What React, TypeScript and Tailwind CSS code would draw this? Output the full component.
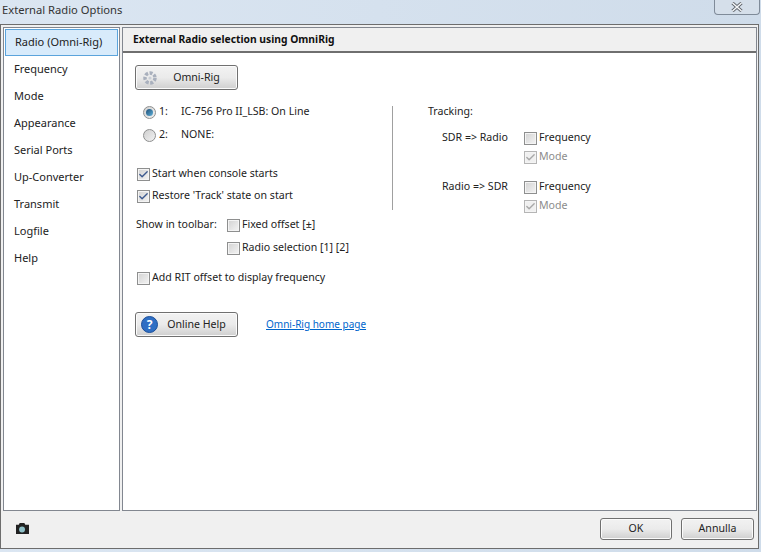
import { Check } from "lucide-react";

const menu = ["Radio (Omni-Rig)", "Frequency", "Mode", "Appearance", "Serial Ports", "Up-Converter", "Transmit", "Logfile", "Help"];

const CheckBox = ({ checked, disabled, label }: { checked?: boolean; disabled?: boolean; label: string }) => (
    <div className={`flex items-center gap-[2px] h-[14px] ${disabled ? "text-[#8c8c8c]" : "text-[#222]"}`}>
        <div className={`w-[13px] h-[13px] border flex items-center justify-center shadow-[inset_0_0_0_1px_#f4f4f4] ${disabled ? "bg-[#f0f0f0] border-[#b5b5b5]" : "border-[#8e8f8f] bg-gradient-to-br from-[#d2d2d2] to-[#f4f4f4]"}`}>
            {checked && <Check size={11} strokeWidth={3} className={disabled ? "text-[#a8a8a8]" : "text-[#3d5a8f]"} />}
        </div>
        <span className="whitespace-nowrap">{label}</span>
    </div>
);

const Radio = ({ selected, num, label }: { selected?: boolean; num: string; label: string }) => (
    <div className="flex items-center h-[12px]">
        <div className="w-[13px] h-[13px] rounded-full border border-[#8e8f8f] bg-gradient-to-br from-[#cfcfcf] to-[#f2f2f2] flex items-center justify-center ml-[8px] mr-[3px]">
            {selected && <div className="w-[7px] h-[7px] rounded-full bg-gradient-to-br from-[#1f4f78] to-[#5fb0d8]" />}
        </div>
        <span className="w-[22px]">{num}</span>
        <span className="whitespace-nowrap">{label}</span>
    </div>
);

const Button = ({ className, children }: { className: string; children: React.ReactNode }) => (
    <div className={`flex items-center justify-center rounded-[3px] border border-[#707070] bg-gradient-to-b from-[#f2f2f2] via-[#ebebeb] to-[#cfcfcf] shadow-[inset_0_0_0_1px_#fbfbfb] text-[#222] ${className}`}>
        {children}
    </div>
);

export default function App() {
    return (
        <div className="w-[761px] h-[552px] flex flex-col bg-gradient-to-r from-[#dbe6f2] to-[#cfdcea] text-[10.6px] text-[#222] overflow-hidden" style={{ fontFamily: '"Noto Sans", sans-serif' }}>
            {/* title bar */}
            <div className="h-[24px] shrink-0 flex items-start justify-between">
                <span className="pl-[2px] pt-[2px] text-[11.2px] text-[#333]">External Radio Options</span>
                <div className="w-[46px] h-[15px] mr-[1px] rounded-b-[4px] border border-t-0 border-[#7f8b99] bg-[#d5dfea] flex items-center justify-center">
                    <svg viewBox="0 0 12 10" className="w-[12px] h-[10px]">
                        <path d="M1.5 1l9 8M10.5 1l-9 8" stroke="#5a5f66" strokeWidth="3.2" />
                        <path d="M1.5 1l9 8M10.5 1l-9 8" stroke="#f4f6f8" strokeWidth="1.6" />
                    </svg>
                </div>
            </div>

            <div className="mr-[2px] h-[525px] shrink-0 border border-[#6d6d6d] bg-[#f0f0f0] flex flex-col">
                <div className="flex-1 flex gap-[2px] pl-[2px] pr-[1px] pt-[2px] min-h-0">
                    {/* sidebar */}
                    <div className="w-[117px] border border-[#828790] bg-white pt-[1px] px-[1px] text-[11px]">
                        {menu.map((m, i) => (
                            <div key={m} className={`h-[27px] flex items-center pl-[9px] whitespace-nowrap ${i === 0 ? "bg-[#d8ebfb] border border-[#5ba4dc] pl-[8px]" : ""}`}>
                                {m}
                            </div>
                        ))}
                    </div>

                    {/* main panel */}
                    <div className="flex-1 border border-[#828790] bg-white flex flex-col">
                        <div className="h-[25px] shrink-0 bg-[#f0f0f0] border-b-2 border-[#6f6f6f] flex items-center pl-[10px] font-bold text-[10.3px] text-[#111]">
                            External Radio selection using OmniRig
                        </div>
                        <div className="pl-[12px] pt-[12px]">
                            <Button className="w-[103px] h-[25px] relative">
                                <svg viewBox="0 0 16 16" className="absolute left-[6px] top-[4px] w-[16px] h-[16px]">
                                    <circle cx="8" cy="8" r="5" fill="none" stroke="#a9b0bd" strokeWidth="3.5" strokeDasharray="3 1.5" />
                                    <circle cx="8" cy="8" r="1.6" fill="#c9ced6" />
                                </svg>
                                <span className="pl-[20px]">Omni-Rig</span>
                            </Button>

                            <div className="flex">
                                {/* left column */}
                                <div className="w-[257px] pt-[16px]">
                                    <Radio selected num="1:" label="IC-756 Pro II_LSB: On Line" />
                                    <div className="mt-[11px]">
                                        <Radio num="2:" label="NONE:" />
                                    </div>
                                    <div className="mt-[26px] flex flex-col gap-[8px] pl-[2px]">
                                        <CheckBox checked label="Start when console starts" />
                                        <CheckBox checked label="Restore 'Track' state on start" />
                                    </div>
                                    <div className="mt-[15px] flex pl-[1px]">
                                        <span className="w-[91px] whitespace-nowrap leading-[12px]">Show in toolbar:</span>
                                        <div className="flex flex-col gap-[9px]">
                                            <CheckBox label="Fixed offset [±]" />
                                            <CheckBox label="Radio selection [1] [2]" />
                                        </div>
                                    </div>
                                    <div className="mt-[16px] pl-[2px]">
                                        <CheckBox label="Add RIT offset to display frequency" />
                                    </div>
                                    <div className="mt-[27px] flex items-center">
                                        <Button className="w-[103px] h-[25px] relative">
                                            <div className="absolute left-[5px] top-[3px] w-[17px] h-[17px] rounded-full bg-[#2f6fc4] border border-[#1c4f9a] text-white font-bold text-[12px] flex items-center justify-center">?</div>
                                            <span className="pl-[20px]">Online Help</span>
                                        </Button>
                                        <a className="ml-[28px] text-[10px] text-[#0066cc] underline whitespace-nowrap">Omni-Rig home page</a>
                                    </div>
                                </div>

                                {/* tracking column */}
                                <div className="mt-[16px] h-[104px] border-l border-[#a0a0a0] pl-[35px] pt-[1px]">
                                    <div className="h-[10px] flex items-center">Tracking:</div>
                                    <div className="mt-[14px] flex pl-[14px]">
                                        <span className="w-[82px] whitespace-nowrap leading-[12px]">SDR =&gt; Radio</span>
                                        <div className="flex flex-col gap-[5px]">
                                            <CheckBox label="Frequency" />
                                            <CheckBox checked disabled label="Mode" />
                                        </div>
                                    </div>
                                    <div className="mt-[16px] flex pl-[14px]">
                                        <span className="w-[82px] whitespace-nowrap leading-[12px]">Radio =&gt; SDR</span>
                                        <div className="flex flex-col gap-[5px]">
                                            <CheckBox label="Frequency" />
                                            <CheckBox checked disabled label="Mode" />
                                        </div>
                                    </div>
                                </div>
                            </div>
                        </div>
                    </div>
                </div>

                {/* footer */}
                <div className="h-[37px] shrink-0 flex items-center justify-between pl-[14px] pr-[4px]">
                    <svg viewBox="0 0 16 14" className="w-[15px] h-[13px] mb-[2px]">
                        <path d="M1 3h3l1-2h5l1 2h4v10H1z" fill="#222" />
                        <circle cx="7.5" cy="8" r="3.2" fill="#8fc0c8" />
                    </svg>
                    <div className="flex gap-[9px] mb-[2px]">
                        <Button className="w-[72px] h-[22px]">OK</Button>
                        <Button className="w-[73px] h-[22px]">Annulla</Button>
                    </div>
                </div>
            </div>
        </div>
    );
}
